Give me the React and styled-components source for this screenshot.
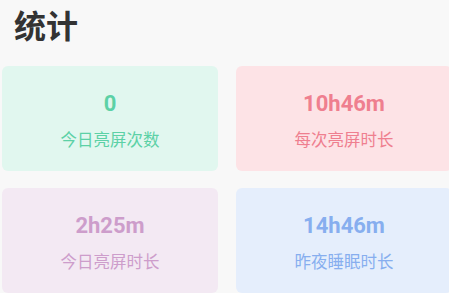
import React from "react";
import styled, { createGlobalStyle } from "styled-components";

const GlobalStyle = createGlobalStyle`
  html, body {
    margin: 0;
    padding: 0;
    background: #f8f8f8;
    overflow: hidden;
  }
`;

const Page = styled.div`
  width: 449px;
  height: 293px;
  overflow: hidden;
  font-family: Roboto, "Noto Sans CJK SC", sans-serif;
`;

const Title = styled.h1`
  margin: 0;
  padding: 4px 0 0 14px;
  height: 62px;
  box-sizing: border-box;
  font-family: "Noto Sans CJK SC", sans-serif;
  font-size: 32px;
  line-height: 40px;
  font-weight: 700;
  color: #333333;
`;

const Grid = styled.div`
  display: grid;
  grid-template-columns: 216px 216px;
  grid-auto-rows: 105px;
  column-gap: 18px;
  row-gap: 17px;
  padding: 4px 0 0 2px;
`;

const Card = styled.div`
  display: flex;
  flex-direction: column;
  align-items: center;
  padding-top: 26px;
  box-sizing: border-box;
  border-radius: 6px;
  background: ${(p) => p.$bg};
  color: ${(p) => p.$fg};
`;

const Value = styled.div`
  font-family: Roboto, sans-serif;
  font-size: 22px;
  line-height: 24px;
  font-weight: 700;
`;

const Label = styled.div`
  margin-top: 12px;
  font-family: "Noto Sans CJK SC", sans-serif;
  font-size: 16.5px;
  line-height: 22px;
`;

const stats = [
  { value: "0", label: "今日亮屏次数", bg: "#e1f7ef", fg: "#5cd1a6" },
  { value: "10h46m", label: "每次亮屏时长", bg: "#fde3e6", fg: "#ef7f8f" },
  { value: "2h25m", label: "今日亮屏时长", bg: "#f3e9f3", fg: "#cd9dcb" },
  { value: "14h46m", label: "昨夜睡眠时长", bg: "#e5eefc", fg: "#87aeef" },
];

export default function App() {
  return (
    <Page>
      <GlobalStyle />
      <Title>统计</Title>
      <Grid>
        {stats.map((s) => (
          <Card key={s.label} $bg={s.bg} $fg={s.fg}>
            <Value>{s.value}</Value>
            <Label>{s.label}</Label>
          </Card>
        ))}
      </Grid>
    </Page>
  );
}
